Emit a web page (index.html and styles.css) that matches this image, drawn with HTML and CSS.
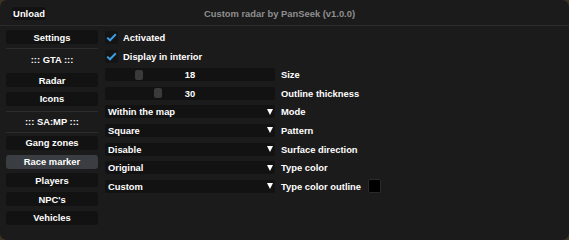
FILE: index.html
```html
<!DOCTYPE html>
<html>
<head>
<meta charset="utf-8">
<link rel="stylesheet" href="styles.css">
</head>
<body>
<div class="window">
  <div class="titlebar">
    <div class="btn unload">Unload</div>
    <div class="title">Custom radar by PanSeek (v1.0.0)</div>
  </div>
  <div class="content">
    <div class="sidebar">
      <div class="btn nav">Settings</div>
      <div class="sep s1"></div>
      <div class="group g1">::: GTA :::</div>
      <div class="btn nav">Radar</div>
      <div class="btn nav">Icons</div>
      <div class="sep s2"></div>
      <div class="group g2">::: SA:MP :::</div>
      <div class="sep s3"></div>
      <div class="btn nav">Gang zones</div>
      <div class="btn nav active">Race marker</div>
      <div class="btn nav">Players</div>
      <div class="btn nav">NPC's</div>
      <div class="btn nav">Vehicles</div>
    </div>
    <div class="main">
      <div class="row">
        <div class="check"><svg width="11" height="9" viewBox="0 0 11 9"><path d="M1.2 4.6 L4 7.3 L9.8 1.3" fill="none" stroke="#3d9ce2" stroke-width="2"/></svg></div>
        <span class="clabel">Activated</span>
      </div>
      <div class="row">
        <div class="check"><svg width="11" height="9" viewBox="0 0 11 9"><path d="M1.2 4.6 L4 7.3 L9.8 1.3" fill="none" stroke="#3d9ce2" stroke-width="2"/></svg></div>
        <span class="clabel">Display in interior</span>
      </div>
      <div class="row">
        <div class="frame slider"><div class="grab" style="left:30px"></div><span class="val">18</span></div>
        <span class="label">Size</span>
      </div>
      <div class="row">
        <div class="frame slider"><div class="grab" style="left:49px"></div><span class="val">30</span></div>
        <span class="label">Outline thickness</span>
      </div>
      <div class="row">
        <div class="frame combo"><span>Within the map</span><i class="arrow"></i></div>
        <span class="label">Mode</span>
      </div>
      <div class="row">
        <div class="frame combo"><span>Square</span><i class="arrow"></i></div>
        <span class="label">Pattern</span>
      </div>
      <div class="row">
        <div class="frame combo"><span>Disable</span><i class="arrow"></i></div>
        <span class="label">Surface direction</span>
      </div>
      <div class="row">
        <div class="frame combo"><span>Original</span><i class="arrow"></i></div>
        <span class="label">Type color</span>
      </div>
      <div class="row">
        <div class="frame combo"><span>Custom</span><i class="arrow"></i></div>
        <span class="label">Type color outline</span>
        <div class="swatch"></div>
      </div>
    </div>
  </div>
</div>
</body>
</html>
```
FILE: styles.css
```css
html, body {
  margin: 0;
  padding: 0;
  background: #3b3520;
}
body {
  width: 569px;
  height: 240px;
  overflow: hidden;
  font-family: "Liberation Sans", Arial, sans-serif;
  font-weight: bold;
  font-size: 9.4px;
  color: #ffffff;
}
.window {
  width: 569px;
  height: 240px;
  background: #1b1b1b;
  border-radius: 7px;
  box-sizing: border-box;
}
.titlebar {
  height: 25px;
  border-bottom: 1px solid #2b2b2b;
  position: relative;
  display: flex;
  align-items: flex-start;
  padding-left: 12px;
}
.btn {
  background: #121212;
  border-radius: 3px;
  display: flex;
  align-items: center;
  justify-content: center;
  color: #fff;
}
.unload {
  margin-top: 7px;
  width: 34px;
  height: 13px;
}
.title {
  position: absolute;
  left: 0;
  right: 10px;
  top: 7px;
  line-height: 13px;
  text-align: center;
  color: #8f8f8f;
}
.content {
  display: flex;
  padding-top: 4px;
}
.sidebar {
  width: 92px;
  margin-left: 6px;
  display: flex;
  flex-direction: column;
}
.nav {
  height: 14px;
  margin-bottom: 4.75px;
}
.nav.active {
  background: #3a3d41;
}
.sep {
  height: 1px;
  background: #2c2c2c;
}
.s1 { margin-top: -0.75px; }
.group {
  text-align: center;
  color: #ffffff;
}
.g1 { height: 24px; line-height: 22px; }
.s2 { margin-top: 0.25px; }
.g2 { height: 20px; line-height: 20px; }
.s3 { margin-bottom: 3px; }
.main {
  margin-left: 7px;
  padding-top: 1px;
  display: flex;
  flex-direction: column;
  gap: 5.6px;
}
.row {
  height: 13px;
  display: flex;
  align-items: center;
}
.check {
  width: 13px;
  height: 13px;
  background: #141414;
  border-radius: 2px;
  display: flex;
  align-items: center;
  justify-content: center;
}
.clabel {
  margin-left: 5px;
}
.frame {
  width: 170px;
  height: 13px;
  background: #121212;
  border-radius: 2px;
  position: relative;
  display: flex;
  align-items: center;
}
.slider {
  justify-content: center;
}
.grab {
  position: absolute;
  top: 1.5px;
  width: 8px;
  height: 10px;
  border-radius: 2px;
  background: #3a3a3a;
}
.val {
  position: relative;
}
.combo {
  justify-content: space-between;
  padding-left: 3px;
  padding-right: 2px;
  box-sizing: border-box;
}
.arrow {
  display: block;
  width: 0;
  height: 0;
  border-left: 3.5px solid transparent;
  border-right: 3.5px solid transparent;
  border-top: 6px solid #ffffff;
}
.label {
  margin-left: 6px;
}
.swatch {
  margin-left: 7px;
  width: 11px;
  height: 12px;
  background: #000;
  border: 1px solid #2a2a2a;
  border-radius: 2px;
}
```
